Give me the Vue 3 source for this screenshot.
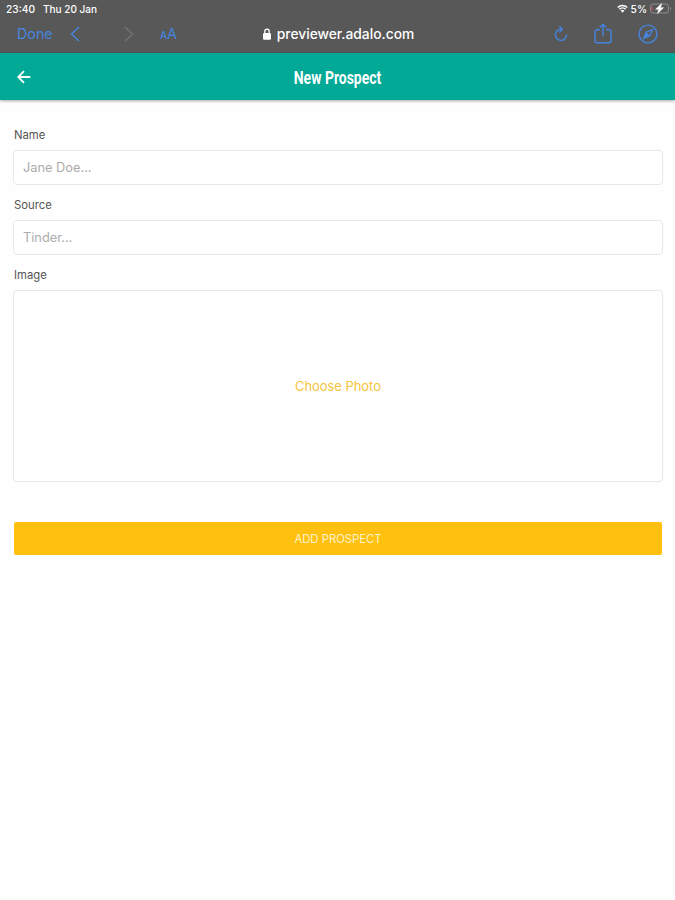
<script setup>
import { ref } from 'vue'

const name = ref('')
const source = ref('')
</script>

<template>
  <div class="screen">
    <header class="browser">
      <div class="status">
        <span class="status__time">23:40</span>
        <span class="status__date">Thu 20 Jan</span>
        <div class="status__right">
          <svg class="status__wifi" viewBox="0 0 12 9" width="11" height="9">
            <path d="M6 9 3.9 6.8a3 3 0 0 1 4.2 0Z" fill="#fff" />
            <path
              d="M.8 3.4a7.4 7.4 0 0 1 10.4 0M2.5 5.3a5 5 0 0 1 7 0"
              fill="none"
              stroke="#fff"
              stroke-width="1.6"
            />
          </svg>
          <span class="status__percent">5%</span>
          <svg class="status__battery" viewBox="0 0 22 11" width="22" height="11">
            <rect x=".5" y="1" width="18" height="9" rx="2.5" fill="none" stroke="#8d8d8d" />
            <path d="M2 3.2v4.6" stroke="#c9525a" stroke-width="1.1" />
            <path d="M20.3 3.8c1.4.4 1.4 3 0 3.4Z" fill="#8d8d8d" />
            <path
              d="M11.6.6 5.6 6.3h3L7.6 10.6l6-5.9h-3Z"
              fill="#fff"
              stroke="#fff"
              stroke-width=".5"
            />
          </svg>
        </div>
      </div>

      <div class="toolbar">
        <div class="toolbar__left">
          <span class="toolbar__done">Done</span>
          <svg class="toolbar__prev" viewBox="0 0 10 16" width="10" height="16">
            <path d="M9 1 1.5 8 9 15" />
          </svg>
          <svg class="toolbar__next" viewBox="0 0 10 16" width="10" height="16">
            <path d="m1 1 7.5 7L1 15" />
          </svg>
          <span class="toolbar__text-size"><small>A</small>A</span>
        </div>

        <div class="toolbar__address">
          <svg viewBox="0 0 8 12" width="8" height="12">
            <path d="M1.8 6V3.4a2.2 2.2 0 0 1 4.4 0V6" fill="none" stroke="#fff" stroke-width="1.3" />
            <rect y="5" width="8" height="6.8" rx="1.2" fill="#fff" />
          </svg>
          <span>previewer.adalo.com</span>
        </div>

        <div class="toolbar__right">
          <svg viewBox="0 0 14 17" width="14" height="17">
            <path d="M7.8 4.2A5.6 5.6 0 1 0 12.6 9.6" />
            <path d="M5.4 1.2 8.4 4.2 5.4 7.2" />
          </svg>
          <svg viewBox="0 0 18 21" width="18" height="21">
            <path d="M5.8 6.8H3A2 2 0 0 0 1 8.8v9A2 2 0 0 0 3 19.8h12a2 2 0 0 0 2-2v-9a2 2 0 0 0-2-2h-2.8" />
            <path d="M9 13.2V1.4M5.7 4.5 9 1.2l3.3 3.3" />
          </svg>
          <svg viewBox="0 0 20 20" width="20" height="20">
            <circle cx="10" cy="10" r="8.9" />
            <path d="m14.3 5.7-2.5 6.1-6.1 2.5 2.5-6.1Z" />
            <path d="m8.2 8.2 3.6 3.6-6.1 2.5Z" class="toolbar__needle" />
          </svg>
        </div>
      </div>
    </header>

    <div class="app-bar">
      <svg class="app-bar__back" viewBox="0 0 14 14" width="14" height="14">
        <path d="M13.3 7H1.5M7 1.2 1.2 7 7 12.8" fill="none" stroke="#fff" stroke-width="1.8" />
      </svg>
      <h1 class="app-bar__title">New Prospect</h1>
    </div>

    <main class="form">
      <label class="form__label" for="name">Name</label>
      <input id="name" v-model="name" class="form__input" type="text" placeholder="Jane Doe..." />

      <label class="form__label" for="source">Source</label>
      <input id="source" v-model="source" class="form__input" type="text" placeholder="Tinder..." />

      <span class="form__label">Image</span>
      <button class="form__photo" type="button">Choose Photo</button>

      <button class="form__submit" type="button">ADD PROSPECT</button>
    </main>
  </div>
</template>

<style>
body {
  background: #fefefe;
}
</style>

<style scoped>
.screen {
  min-height: 900px;
  font-family: Inter, 'Liberation Sans', sans-serif;
}

.screen * {
  box-sizing: border-box;
}

svg {
  display: block;
  flex: none;
}

.browser {
  height: 53px;
  background: #585858;
  color: #fff;
}

.status {
  display: flex;
  align-items: center;
  height: 17px;
  padding: 0 3px 0 6px;
  font-size: 10.2px;
  font-weight: 500;
}

.status__time {
  width: 37px;
}

.status__date {
  font-size: 10px;
}

.status__right {
  display: flex;
  align-items: center;
  gap: 3px;
  margin-left: auto;
}

.toolbar {
  display: grid;
  grid-template-columns: 1fr auto 1fr;
  align-items: center;
  height: 33px;
  padding: 0 17px;
}

.toolbar__left {
  display: flex;
  align-items: center;
  color: #4585df;
  font-size: 14.3px;
}

.toolbar__done {
  width: 53px;
}

.toolbar__left svg,
.toolbar__right svg {
  fill: none;
  stroke: #4585df;
  stroke-width: 1.4;
}

.toolbar__left .toolbar__next {
  margin-left: 44px;
  stroke: #747474;
}

.toolbar__text-size {
  margin-left: 26px;
}

.toolbar__text-size small {
  font-size: 10px;
  font-weight: 500;
}

.toolbar__address {
  display: flex;
  align-items: center;
  gap: 6px;
  padding-left: 2px;
  font-size: 13.8px;
  font-weight: 500;
}

.toolbar__right {
  display: flex;
  align-items: center;
  justify-content: flex-end;
  gap: 26px;
}

.toolbar__right .toolbar__needle {
  fill: #4585df;
  stroke: none;
}

.app-bar {
  display: grid;
  grid-template-columns: 14px 1fr 14px;
  align-items: center;
  height: 47px;
  padding: 0 17px;
  background: #02a997;
  box-shadow: 0 1px 3px rgba(0, 0, 0, 0.35);
}

.app-bar__title {
  margin: 3px 0 0;
  color: #fff;
  font-family: Roboto, sans-serif;
  font-size: 19px;
  font-weight: 700;
  line-height: 24px;
  text-align: center;
  transform: scaleX(0.735);
}

.form {
  display: flex;
  flex-direction: column;
  padding: 26px 12px 0 13px;
}

.form__label {
  height: 24px;
  padding-left: 1px;
  color: #555;
  font-size: 11.3px;
  line-height: 19px;
}

.form__input {
  width: 100%;
  height: 35px;
  margin: 0 0 11px;
  padding: 0 9px;
  border: 1px solid #e8e8e8;
  border-radius: 4px;
  outline: none;
  background: #fff;
  color: #333;
  font-family: inherit;
  font-size: 12.8px;
}

.form__input::placeholder {
  color: #acacac;
  opacity: 1;
}

.form__photo {
  height: 192px;
  padding: 0;
  border: 1px solid #e8e8e8;
  border-radius: 4px;
  background: #fff;
  color: #f5c33b;
  font-family: inherit;
  font-size: 12.9px;
}

.form__submit {
  height: 33px;
  margin: 40px 1px 0;
  padding: 1px 0 0;
  border: 0;
  border-radius: 2px;
  background: #ffc010;
  color: #fff3c9;
  font-family: inherit;
  font-size: 11.3px;
}
</style>
